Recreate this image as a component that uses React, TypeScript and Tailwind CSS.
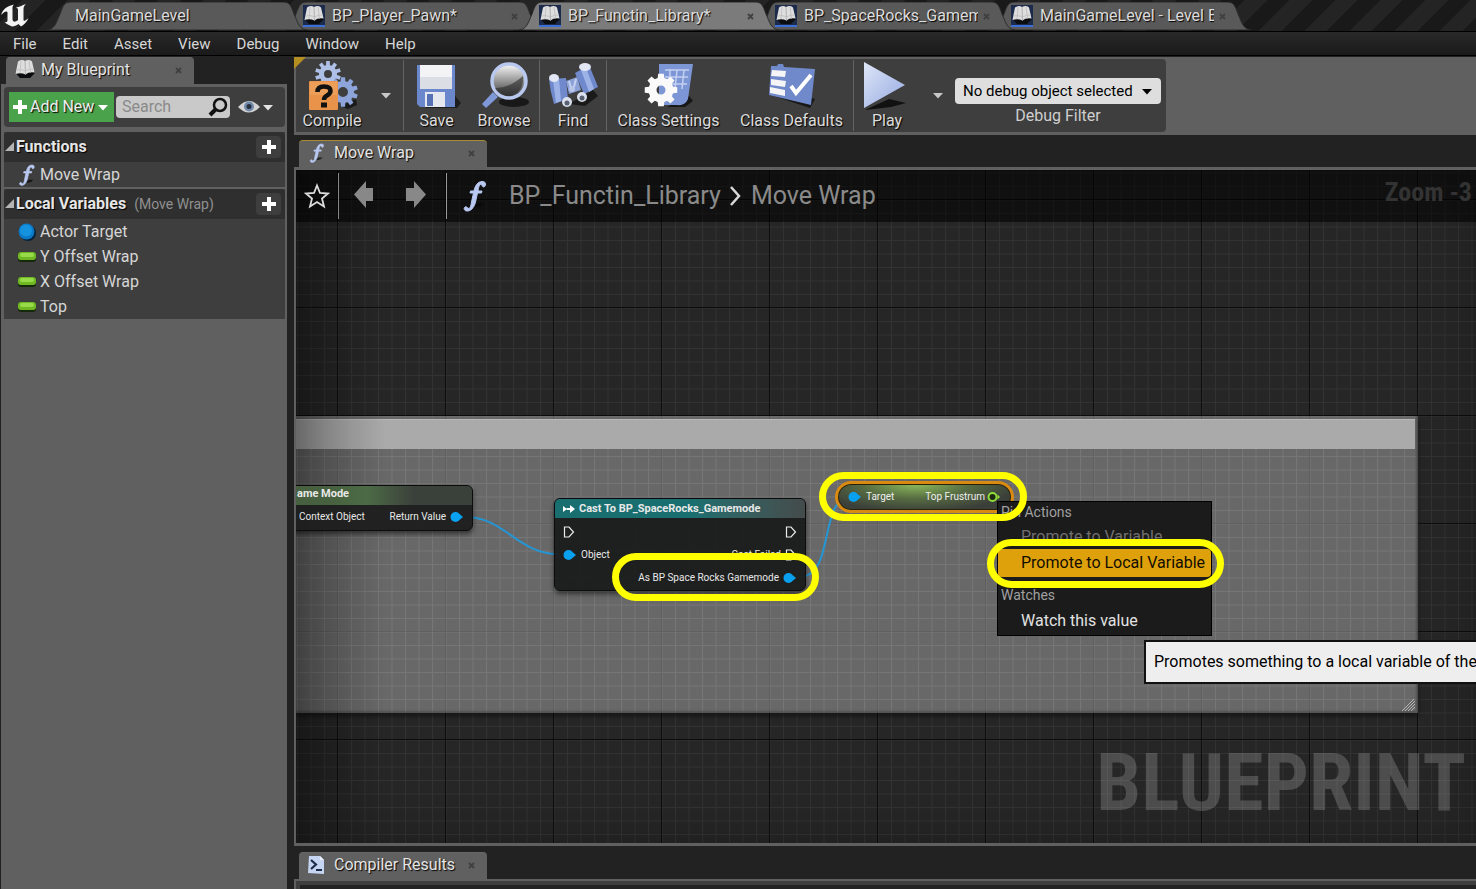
import React from "react";

const SHADOW = "[text-shadow:1px_1px_1px_#000]";

function gearPath(cx: number, cy: number, outer: number, inner: number, teeth: number) {
  const pts: string[] = [];
  const step = (Math.PI * 2) / teeth;
  for (let i = 0; i < teeth; i++) {
    const a = i * step - Math.PI / 2;
    const corners: [number, number][] = [
      [-0.34, inner],
      [-0.22, outer],
      [0.22, outer],
      [0.34, inner],
    ];
    corners.forEach(([o, r]) => {
      pts.push(`${(cx + Math.cos(a + o * step) * r).toFixed(2)} ${(cy + Math.sin(a + o * step) * r).toFixed(2)}`);
    });
  }
  return `M${pts.join("L")}Z`;
}

function UnrealLogo() {
  return (
    <svg width="30" height="30" viewBox="0 0 30 30" aria-hidden="true">
      <path
        fill="#f4f4f4"
        d="M1 15C3 9 7 6 14 4.5C12.5 6 12.5 7 12.5 9V19.5C12.5 21 14 22 15.500 21.500C16.300 21.200 17.500 20.500 18 20V10C18 8.500 17.500 8 16 7.500C19 7 22 5.500 26 4C24 6 23.500 7 23.500 9V20C23.500 21.500 25 21 28.500 18C27 22 24 24.500 21 26.500L18.500 24C16.500 25.500 14.500 26.500 12 26.500C9.500 25.500 7 24 4.500 22.500C7 22.300 7.500 21.500 7.500 20V13C7.500 10.500 5 11 1 15Z"
      />
    </svg>
  );
}

function BookIcon({ framed = false }: { framed?: boolean }) {
  return (
    <svg width="22" height="22" viewBox="0 0 22 22" className="shrink-0" aria-hidden="true">
      {framed && <rect width="22" height="22" fill="#1c2a4c" />}
      {framed && <rect y="20" width="22" height="2" fill="#3c6fd6" />}
      <path d="M1.500 14L6 19H16L21 14L18 12H4Z" fill="#0c0d10" />
      <path d="M4 2.500Q8 0 11 2Q15 0 18 2.500L20.500 13.500Q15 12.500 11.500 15.500Q7 13.500 1.500 15Z" fill="#dedede" />
      <path d="M11 2L11.500 15.500" stroke="#b0b0b0" fill="none" />
      <path d="M7 2L6 14M15 2L16.500 13.500M2.500 11Q7 9.500 11.500 12Q15 9.500 20 10" stroke="#c4c4c4" fill="none" />
    </svg>
  );
}

function CloseIcon() {
  return (
    <svg width="7" height="7" viewBox="0 0 7 7" aria-hidden="true">
      <path d="M1 1L6 6M6 1L1 6" stroke="#404040" strokeWidth="1.800" />
    </svg>
  );
}

function FunctionIcon({ size }: { size: number }) {
  return (
    <svg width={size} height={size} viewBox="0 0 32 32" className="shrink-0" aria-hidden="true">
      <path d="M13 28L18 23L25 23L22 26Z" fill="#070707" opacity=".7" />
      <path
        fill="#b9c8f0"
        stroke="#b9c8f0"
        strokeWidth="1"
        d="M26 2.500C27 4 26.500 7 24.500 7C23 7 23.500 4.500 22 4.500C20 4.500 19.500 8 19 11H23L22.500 13H18.500L16.500 22C15 28 11.500 31.500 7.500 31C5 30.700 4.500 28 6 27C8 26 8.500 28.800 10 28.500C11.500 28.200 12 25 12.500 22L14.500 13H11L11.500 11H15C16 5.500 19 1.500 23 1.500C24.500 1.500 25.500 2 26 2.500Z"
      />
    </svg>
  );
}

function Caret({ className = "text-[#c8c8c8]" }: { className?: string }) {
  return (
    <svg width="12" height="7" viewBox="0 0 12 7" className={className} aria-hidden="true">
      <path d="M1 1H11L6 6.500Z" fill="currentColor" />
    </svg>
  );
}

function PlusIcon() {
  return (
    <svg width="14" height="14" viewBox="0 0 14 14" aria-hidden="true">
      <path d="M5 0H9V5H14V9H9V14H5V9H0V5H5Z" fill="#fff" />
    </svg>
  );
}

function CompileIcon() {
  return (
    <svg width="52" height="50" viewBox="0 0 52 50" aria-hidden="true">
      <path d="M34 45L50 38L51 44L42 48Z" fill="#1a1a1a" />
      <path fillRule="evenodd" fill="#aebfe8" d={gearPath(22, 13, 13, 9, 10) + "M22 9A4 4 0 1 0 22 17A4 4 0 1 0 22 9Z"} />
      <path fillRule="evenodd" fill="#8ea5dc" d={gearPath(37, 31, 15, 11, 10) + "M37 26A5 5 0 1 0 37 36A5 5 0 1 0 37 26Z"} />
      <rect x="3" y="20" width="29" height="29" rx="1" fill="#e8924a" />
      <rect x="4" y="21" width="27" height="13" fill="#f0a763" opacity=".6" />
      <path d="M11.500 31Q11.500 25.500 18 25.500Q24.500 25.500 24.500 30Q24.500 32.500 21 34.500Q18 36 18 39" fill="none" stroke="#111" strokeWidth="4.500" />
      <rect x="15" y="41.500" width="6" height="5" fill="#111" />
    </svg>
  );
}

function SaveIcon() {
  return (
    <svg width="48" height="50" viewBox="0 0 48 50" aria-hidden="true">
      <path d="M38 30L48 42L44 47H12Z" fill="#1d1d1d" />
      <path d="M4 4H42V46H7L4 43Z" fill="#6b88cd" />
      <path d="M7 4H39V28H7Z" fill="#f3f3f5" />
      <path d="M7 16H39V28H7Z" fill="#dcdee6" />
      <path d="M12 31H32V46H12Z" fill="#e6e8ef" />
      <path d="M14 33H20V45H14Z" fill="#5671b6" />
    </svg>
  );
}

function BrowseIcon() {
  return (
    <svg width="52" height="50" viewBox="0 0 52 50" aria-hidden="true">
      <defs>
        <linearGradient id="lens" x1="0" y1="0" x2="0" y2="1">
          <stop offset="0" stopColor="#fafafa" />
          <stop offset=".55" stopColor="#8c8c8c" />
          <stop offset="1" stopColor="#303030" />
        </linearGradient>
      </defs>
      <ellipse cx="36" cy="41" rx="15" ry="5" fill="#181818" />
      <path d="M15 31L4 43L8 47L20 36Z" fill="#7f99d8" />
      <circle cx="31" cy="20" r="17" fill="url(#lens)" stroke="#b9c8ef" strokeWidth="3.500" />
      <path d="M17 27Q30 28 45 15Q46 32 31 35Q20 34 17 27Z" fill="#2a2a2a" opacity=".6" />
    </svg>
  );
}

function FindIcon() {
  return (
    <svg width="52" height="50" viewBox="0 0 52 50" aria-hidden="true">
      <path d="M22 43L46 29L51 35L38 45Z" fill="#1a1a1a" />
      <path d="M2 18L19 17L21 38L7 43Q3 30 2 18Z" fill="#6f89cc" />
      <path d="M28 12L42 4Q47 16 51 26L37 33Z" fill="#6f89cc" />
      <path d="M6 19L12 18L14 40L9 42Z" fill="#9db3e8" />
      <path d="M34 9L39 7L47 28L42 31Z" fill="#9db3e8" />
      <path d="M19 20L30 16L34 29L22 33Z" fill="#8ba1d8" />
      <path d="M22 20L25 30M29 18L27 26" stroke="#c6d1ef" strokeWidth="2" />
      <circle cx="25" cy="28" r="3" fill="#b9c6ea" />
      <ellipse cx="7" cy="17" rx="5" ry="4" fill="#e3e7f3" />
      <ellipse cx="38" cy="6" rx="6" ry="4" fill="#e3e7f3" />
      <circle cx="20" cy="41" r="5" fill="#dbe0ee" />
      <circle cx="20" cy="42" r="2.500" fill="#59606f" />
      <circle cx="35" cy="36" r="5" fill="#dbe0ee" />
      <circle cx="35" cy="37" r="2.500" fill="#59606f" />
    </svg>
  );
}

function SettingsIcon() {
  return (
    <svg width="52" height="50" viewBox="0 0 52 50" aria-hidden="true">
      <path d="M24 46L46 35L50 40L42 46Z" fill="#181818" />
      <path d="M16 3H50L45 38Q42 45 34 44H16Z" fill="#7d97d6" />
      <path d="M22 9H46M22 16H45M28 23H44M34 9L32 28M41 9L39 28M27 8V15" stroke="#c3d0f1" strokeWidth="1.500" />
      <path fillRule="evenodd" fill="#fafafa" d={gearPath(18, 29, 16.5, 12.5, 8) + "M18 24.500A4.500 4.500 0 1 0 18 33.500A4.500 4.500 0 1 0 18 24.500Z"} />
    </svg>
  );
}

function DefaultsIcon() {
  return (
    <svg width="52" height="50" viewBox="0 0 52 50" aria-hidden="true">
      <path d="M8 35L44 47L49 38L20 30Z" fill="#181818" />
      <path d="M5 5H11L12 3H17L18 6L49 8L45 44L3 34Z" fill="#7089cb" />
      <path d="M6 9L20 10L19 16L5 15ZM5 18L20 20L19 26L5 24ZM4 26L19 29L19 35L4 32Z" fill="#f5f5f8" />
      <path d="M25 25L30 32L45 14" fill="none" stroke="#fff" strokeWidth="4" />
    </svg>
  );
}

function PlayIcon() {
  return (
    <svg width="48" height="50" viewBox="0 0 48 50" aria-hidden="true">
      <defs>
        <linearGradient id="play" x1="0" y1="0" x2="1" y2="1">
          <stop offset="0" stopColor="#dfe6f8" />
          <stop offset="1" stopColor="#93a9df" />
        </linearGradient>
      </defs>
      <path d="M2 49L26 38L43 42L28 46Z" fill="#111" />
      <path d="M1 1L42 24L1 47Z" fill="url(#play)" />
    </svg>
  );
}

type WindowTabProps = { title: string; icon?: boolean; active?: boolean; closable?: boolean; z: string };

function WindowTab({ title, icon = true, active = false, closable = true, z }: WindowTabProps) {
  return (
    <div className={`relative -mr-6 flex h-7 w-[260px] shrink-0 items-center pr-5 ${icon ? "pl-5" : "pl-7"} ${z}`}>
      <svg className="absolute inset-0 h-full w-full" viewBox="0 0 260 28" preserveAspectRatio="none" aria-hidden="true">
        <path
          d="M0 28C8 27 9 21 13 12C16 4 17 0 24 0H236C243 0 244 4 247 12C251 21 252 27 260 28Z"
          fill={active ? "#7b7b7b" : "#595959"}
          stroke="#2c2c2c"
          strokeWidth="1"
        />
      </svg>
      {icon && (
        <span className="relative mr-[7px]">
          <BookIcon framed />
        </span>
      )}
      <button className={`relative min-w-0 flex-1 overflow-hidden text-left whitespace-nowrap text-[#dcdcdc] ${SHADOW}`}>{title}</button>
      {closable && (
        <button aria-label={`Close ${title}`} className="relative px-[5px]">
          <CloseIcon />
        </button>
      )}
    </div>
  );
}

function PanelTab({ title, icon, gold = false }: { title: string; icon: React.ReactNode; gold?: boolean }) {
  return (
    <div
      className={`flex h-[27px] w-[188px] items-center gap-[5px] rounded-t-sm border-t bg-[#606060] pr-3 pb-0.5 pl-2 ${gold ? "border-[#a98a35]" : "border-[#666]"}`}
    >
      <span className="flex w-[22px] shrink-0">{icon}</span>
      <button className={`flex-1 text-left whitespace-nowrap text-[#e4e4e4] ${SHADOW}`}>{title}</button>
      <button aria-label={`Close ${title}`}>
        <CloseIcon />
      </button>
    </div>
  );
}

function SectionHeader({ title, note }: { title: string; note?: string }) {
  return (
    <div className="flex h-[30px] items-center rounded-t bg-[#2f2f2f] pr-1">
      <svg width="12" height="12" viewBox="0 0 12 12" aria-hidden="true">
        <path d="M10 1V10H1Z" fill="#b5b5b5" />
      </svg>
      <h2 className={`font-bold text-[#e6e6e6] ${SHADOW}`}>{title}</h2>
      {note && <span className="ml-2 text-sm text-[#8f8f8f]">{note}</span>}
      <button aria-label={`Add ${title}`} className="ml-auto flex h-[22px] w-[25px] items-center justify-center rounded-sm bg-[#3e3e3e]">
        <PlusIcon />
      </button>
    </div>
  );
}

function VariableRow({ name, kind }: { name: string; kind: "object" | "float" }) {
  return (
    <li className="flex h-[25px] items-center gap-1 pl-3.5">
      <svg width="18" height="18" viewBox="0 0 18 18" aria-hidden="true">
        {kind === "object" ? (
          <>
            <circle cx="10" cy="10" r="8" fill="#04213a" />
            <circle cx="8.500" cy="8.500" r="8" fill="#0a78c4" />
            <circle cx="8" cy="7.500" r="6" fill="#1592de" />
          </>
        ) : (
          <>
            <rect y="4" width="18" height="10" rx="3" fill="#16280a" />
            <rect y="4" width="18" height="8" rx="3" fill="#6fb824" />
            <rect x="2" y="5" width="14" height="4" rx="2" fill="#97dc48" />
          </>
        )}
      </svg>
      <span>{name}</span>
    </li>
  );
}

function Sidebar() {
  return (
    <aside className="flex w-[287px] shrink-0 flex-col pt-px pl-px">
      <div className="pl-[5px]">
        <PanelTab title="My Blueprint" icon={<BookIcon />} />
      </div>
      <div className="flex flex-1 flex-col bg-[#606060] pt-[3px] pr-0.5 pl-[3px]">
        <div className="mb-[5px] flex h-10 items-center gap-0.5 rounded bg-[#3e3e3e] px-[5px]">
          <button className="flex h-[30px] w-[105px] shrink-0 items-center gap-[3px] bg-[#4aa24a] pl-1 whitespace-nowrap text-[#eee]">
            <PlusIcon />
            <span className={SHADOW}>Add New</span>
            <Caret className="text-white" />
          </button>
          <div className="flex h-[22px] w-[114px] items-center rounded-sm bg-[#c9c9c9] pr-0.5 pl-1.5">
            <input
              type="search"
              aria-label="Search"
              placeholder="Search"
              className="w-full min-w-0 bg-transparent text-base leading-5 outline-none placeholder:text-[#8a8a8a]"
            />
            <svg width="20" height="20" viewBox="0 0 20 20" className="shrink-0" aria-hidden="true">
              <circle cx="12" cy="8" r="6" fill="none" stroke="#111" strokeWidth="2.500" />
              <path d="M8 12L2 18" stroke="#111" strokeWidth="4" />
            </svg>
          </div>
          <button aria-label="View options" className="flex items-center gap-0.5 pl-1.5">
            <svg width="22" height="14" viewBox="0 0 22 14" aria-hidden="true">
              <path d="M0 7Q11 -5 22 7Q11 18 0 7Z" fill="#d4d4d4" />
              <circle cx="11" cy="6.500" r="5" fill="#7189a9" />
              <circle cx="11" cy="6.500" r="2.500" fill="#26313f" />
            </svg>
            <Caret className="text-[#e4e4e4]" />
          </button>
        </div>
        <section className="mb-0.5 bg-[#3e3e3e]">
          <SectionHeader title="Functions" />
          <ul className="text-[#d6d6d6]">
            <li className="flex h-[25px] items-center gap-0.5 pl-3">
              <FunctionIcon size={22} />
              <span>Move Wrap</span>
            </li>
          </ul>
        </section>
        <section className="bg-[#3e3e3e]">
          <SectionHeader title="Local Variables" note="(Move Wrap)" />
          <ul className="text-[#d6d6d6]">
            <VariableRow name="Actor Target" kind="object" />
            <VariableRow name="Y Offset Wrap" kind="float" />
            <VariableRow name="X Offset Wrap" kind="float" />
            <VariableRow name="Top" kind="float" />
          </ul>
        </section>
      </div>
    </aside>
  );
}

function ToolButton({ label, icon, width }: { label: string; icon: React.ReactNode; width: string }) {
  return (
    <button className={`flex shrink-0 flex-col items-center ${width}`}>
      {icon}
      <span className={`leading-5 whitespace-nowrap text-[#dcdcdc] ${SHADOW}`}>{label}</span>
    </button>
  );
}

function ToolSeparator() {
  return <div className="my-px w-px shrink-0 self-stretch bg-[#636363]" />;
}

function Toolbar() {
  return (
    <div className="relative shrink-0 bg-[#606060] pt-0.5 pb-[3px] pl-0.5">
      <div className="flex h-[73px] w-fit items-center rounded-r bg-[#3e3e3e] pr-[5px]">
        <ToolButton label="Compile" icon={<CompileIcon />} width="w-[72px]" />
        <button aria-label="Compile options" className="flex w-[35px] justify-center">
          <Caret />
        </button>
        <ToolSeparator />
        <ToolButton label="Save" icon={<SaveIcon />} width="w-[65px]" />
        <ToolButton label="Browse" icon={<BrowseIcon />} width="w-[70px]" />
        <ToolSeparator />
        <ToolButton label="Find" icon={<FindIcon />} width="w-[66px]" />
        <ToolSeparator />
        <ToolButton label="Class Settings" icon={<SettingsIcon />} width="w-[123px]" />
        <ToolButton label="Class Defaults" icon={<DefaultsIcon />} width="w-[123px]" />
        <ToolSeparator />
        <ToolButton label="Play" icon={<PlayIcon />} width="w-[66px]" />
        <button aria-label="Play options" className="flex w-[35px] justify-center">
          <Caret />
        </button>
        <div className="flex flex-col items-center self-end pb-1">
          <div className="relative">
            <select
              id="debug-object"
              className="h-[26px] w-[206px] appearance-none rounded-sm bg-[#dedede] pl-2 text-[15px] text-black"
              defaultValue="none"
            >
              <option value="none">No debug object selected</option>
            </select>
            <Caret className="pointer-events-none absolute top-2.5 right-2 text-black" />
          </div>
          <label htmlFor="debug-object" className="leading-6 text-[#cfcfcf]">
            Debug Filter
          </label>
        </div>
      </div>
      <svg width="12" height="12" viewBox="0 0 12 12" className="absolute top-0 left-0" aria-hidden="true">
        <path d="M0 0H12L0 12Z" fill="#b58e22" />
      </svg>
    </div>
  );
}

function GraphGrid() {
  return (
    <svg className="absolute inset-0 h-full w-full" aria-hidden="true">
      <defs>
        <pattern id="minor" x="41.5" y="29.5" width="13.5" height="13.5" patternUnits="userSpaceOnUse">
          <path d="M0 .500H13.500M.500 0V13.500" stroke="#fff" strokeOpacity=".055" fill="none" />
        </pattern>
        <pattern id="major" x="41" y="29" width="108" height="108" patternUnits="userSpaceOnUse">
          <path d="M0 .500H108M.500 0V108" stroke="#000" strokeOpacity=".7" fill="none" />
        </pattern>
      </defs>
      <rect width="100%" height="100%" fill="url(#minor)" />
      <rect width="100%" height="100%" fill="url(#major)" />
    </svg>
  );
}

function DataPin({ hollow = false }: { hollow?: boolean }) {
  return (
    <svg width="14" height="12" viewBox="0 0 14 12" className="shrink-0" aria-hidden="true">
      {hollow ? (
        <>
          <circle cx="5.500" cy="6" r="4" fill="#1c2a12" stroke="#8fdc3a" strokeWidth="2" />
          <path d="M10.500 3.500L13 6L10.500 8.500Z" fill="#8fdc3a" />
        </>
      ) : (
        <>
          <circle cx="5.500" cy="6" r="5" fill="#0aa0f0" />
          <path d="M9.500 3L13 6L9.500 9Z" fill="#0aa0f0" />
        </>
      )}
    </svg>
  );
}

function ExecPin() {
  return (
    <svg width="12" height="12" viewBox="0 0 12 12" className="shrink-0" aria-hidden="true">
      <path d="M1.500 1H6L10.500 6L6 11H1.500Z" fill="none" stroke="#ececec" strokeWidth="1.200" />
    </svg>
  );
}

function Highlight({ place }: { place: string }) {
  return <div className={`pointer-events-none absolute rounded-full border-[7px] border-[#ffff00] ${place}`} />;
}

const NODE = "absolute rounded-md border border-[#0c0c0c] text-[10px] leading-4 text-[#e8e8e8] shadow-[0_3px_5px_rgba(0,0,0,0.5)]";

function Graph() {
  return (
    <main className="relative min-h-0 flex-1 overflow-hidden bg-[#262626]">
      <GraphGrid />
      <div className="absolute top-[246px] left-0 h-[297px] w-[1122px] bg-[#aaaaaa]/50 shadow-[inset_-2px_-2px_2px_rgba(60,60,60,0.5),0_3px_5px_rgba(0,0,0,0.5)]" />
      <svg className="absolute inset-0 h-full w-full" aria-hidden="true">
        <rect y="279" width="1120" height="262" fill="url(#minor)" />
      </svg>
      <div className="absolute top-[249px] left-0 h-[30px] w-[1119px] border-t border-[#b8b8b8] bg-[#aaaaaa]" />
      <div className="pointer-events-none absolute inset-0 bg-linear-to-r from-black/30 to-transparent to-[90px]" />
      <div className="pointer-events-none absolute inset-0 shadow-[inset_0_0_50px_rgba(0,0,0,0.25)]" />

      <svg className="absolute inset-0 h-full w-full" aria-hidden="true">
        <path d="M170 347C208 347 222 384 262 384" fill="none" stroke="#2596d4" strokeWidth="2" />
        <path d="M503 407C540 407 522 327 555 327" fill="none" stroke="#2596d4" strokeWidth="2" />
        <path d="M1109 541L1119 531M1112 541L1119 534M1115 541L1119 537M1106 541L1118 529" stroke="#b5b5b5" />
      </svg>

      <div className={`${NODE} top-[315px] -left-4 h-[46px] w-[193px] overflow-hidden bg-[#1c1e1c]/95`}>
        <div className="h-[19px] bg-linear-to-r from-[#47603f] from-25% via-[#4c6b45] via-45% to-[#3a403a] to-70% pl-4 text-[11px] font-bold">
          ame Mode
        </div>
        <div className="flex h-6 items-center justify-between pr-2 pl-[18px]">
          <span>Context Object</span>
          <span className="flex items-center gap-1">
            Return Value
            <DataPin />
          </span>
        </div>
      </div>

      <div className={`${NODE} top-[328px] left-[258px] h-[93px] w-[252px] overflow-hidden bg-[#1a1c1b]/95`}>
        <div className="flex h-[19px] items-center gap-1 bg-linear-to-r from-[#196f70] from-55% to-[#444b4b] pl-2 text-[11px] font-bold">
          <svg width="12" height="10" viewBox="0 0 12 10" aria-hidden="true">
            <path d="M0 2V8L4 5ZM3 4H8V6H3ZM7 1L12 5L7 9Z" fill="#fff" />
          </svg>
          Cast To BP_SpaceRocks_Gamemode
        </div>
        <div className="flex flex-col pt-0.5 pr-2 pl-2">
          <div className="flex h-[23px] items-center justify-between">
            <ExecPin />
            <ExecPin />
          </div>
          <div className="flex h-[23px] items-center justify-between">
            <span className="flex items-center gap-1">
              <DataPin />
              Object
            </span>
            <span className="flex items-center gap-1">
              Cast Failed
              <ExecPin />
            </span>
          </div>
          <div className="flex h-[23px] items-center justify-end gap-1">
            As BP Space Rocks Gamemode
            <DataPin />
          </div>
        </div>
      </div>

      <div className="absolute top-[311px] left-[539px] flex h-8 w-[179px] items-center justify-between rounded-2xl border-[3px] border-[#d98a10] bg-[radial-gradient(ellipse_at_45%_0%,#8dbb5c,#566b42_40%,#3b3f39_75%)] pr-2.5 pl-2.5 text-[10px] leading-4 text-[#eee] shadow-[inset_0_0_0_1px_#2a2208]">
        <span className="flex items-center gap-1">
          <DataPin />
          Target
        </span>
        <span className="flex items-center gap-0.5">
          Top Frustrum
          <DataPin hollow />
        </span>
      </div>

      <div className="absolute inset-x-0 top-0 flex h-[52px] items-center bg-black/55">
        <button aria-label="Favorite" className="flex w-[42px] justify-center">
          <svg width="26" height="26" viewBox="0 0 26 26" aria-hidden="true">
            <path d="M13 2.500L16 10L24 10.500L18 15.500L20 23.500L13 19L6 23.500L8 15.500L2 10.500L10 10Z" fill="none" stroke="#dedede" strokeWidth="1.800" />
          </svg>
        </button>
        <div className="h-[46px] w-px bg-[#888]" />
        <div className="flex w-[107px] gap-[30px] pl-3.5">
          <button aria-label="Back">
            <svg width="22" height="32" viewBox="0 0 22 32" aria-hidden="true">
              <path d="M1 14.500L13 1V8H20V21H13V28Z" fill="#888" />
            </svg>
          </button>
          <button aria-label="Forward">
            <svg width="22" height="32" viewBox="0 0 22 32" aria-hidden="true">
              <path d="M21 14.500L9 1V8H1V21H9V28Z" fill="#888" />
            </svg>
          </button>
        </div>
        <div className="h-[46px] w-px bg-[#999]" />
        <nav aria-label="Breadcrumb" className="flex items-center pl-3 text-[25px] whitespace-nowrap text-[#8a8a8a]">
          <FunctionIcon size={32} />
          <a href="#library" className="pl-[18px]">
            BP_Functin_Library
          </a>
          <svg width="14" height="22" viewBox="0 0 14 22" className="mx-2" aria-hidden="true">
            <path d="M2 2L10 11L2 20" fill="none" stroke="#d8d8d8" strokeWidth="2.500" />
          </svg>
          <a href="#move-wrap">Move Wrap</a>
        </nav>
        <div className="ml-auto self-start pt-3 pr-1 font-['Roboto_Condensed',Roboto,sans-serif] text-[26px] font-bold whitespace-nowrap text-[#333]">
          Zoom -3
        </div>
      </div>

      <div className="absolute right-2.5 bottom-5 font-['Roboto_Condensed',Roboto,sans-serif] text-[80px] leading-[80px] font-bold text-white/18">
        BLUEPRINT
      </div>

      <div role="menu" className="absolute top-[331px] left-[701px] flex h-[135px] w-[215px] flex-col border border-black bg-[#1b1b1b] text-[#e2e2e2]">
        <div className="h-[22px] pl-[3px] text-sm leading-5 text-[#a0a0a0]">Pin Actions</div>
        <button role="menuitem" className="h-[25px] pl-[23px] text-left text-[#6f6f6f]">
          Promote to Variable
        </button>
        <button role="menuitem" className="h-7 rounded-sm bg-[#dea10c] pl-[23px] text-left whitespace-nowrap text-[#120d00]">
          Promote to Local Variable
        </button>
        <div className="mt-2 h-[22px] pl-[3px] text-sm leading-5 text-[#a0a0a0]">Watches</div>
        <button role="menuitem" className="h-7 pl-[23px] text-left">
          Watch this value
        </button>
      </div>

      <div role="tooltip" className="absolute top-[470px] left-[848px] flex h-11 w-[400px] items-center border-2 border-[#111] bg-[#eeeeee] pl-2 whitespace-nowrap text-black">
        Promotes something to a local variable of the
      </div>

      <Highlight place="top-[302px] left-[523px] h-[49px] w-[208px]" />
      <Highlight place="top-[383px] left-[316px] h-[48px] w-[207px]" />
      <Highlight place="top-[369px] left-[691px] h-[49px] w-[237px]" />
    </main>
  );
}

function ScriptIcon() {
  return (
    <svg width="18" height="20" viewBox="0 0 18 20" aria-hidden="true">
      <path d="M2 1H13L17 5V19L1 18Z" fill="#c5d5f2" />
      <path d="M13 1V5H17Z" fill="#eef3ff" />
      <path d="M4 5L9 9.500L4 14M9 15H15" fill="none" stroke="#1e2c48" strokeWidth="2.200" />
    </svg>
  );
}

export default function App() {
  const menus = ["File", "Edit", "Asset", "View", "Debug", "Window", "Help"];
  return (
    <div className="flex h-screen flex-col overflow-hidden bg-[#222222] font-[Roboto,sans-serif] text-base leading-5 text-[#d6d6d6]">
      <header className="flex h-[31px] shrink-0 items-start overflow-hidden bg-[repeating-linear-gradient(135deg,#191919_0_16px,#242424_16px_32px)] pt-0.5">
        <div className="-mt-0.5 w-[47px] shrink-0">
          <UnrealLogo />
        </div>
        <WindowTab title="MainGameLevel" icon={false} closable={false} z="z-30" />
        <WindowTab title="BP_Player_Pawn*" z="z-20" />
        <WindowTab title="BP_Functin_Library*" active z="z-40" />
        <WindowTab title="BP_SpaceRocks_Gamemode" z="z-20" />
        <WindowTab title="MainGameLevel - Level Blueprint" z="z-10" />
      </header>
      <nav
        aria-label="Main menu"
        className="flex h-[25px] shrink-0 items-center gap-[26px] border-y border-black bg-linear-to-b from-[#292929] to-[#1a1a1a] pl-[13px] text-[15px]"
      >
        {menus.map((m) => (
          <button key={m}>{m}</button>
        ))}
      </nav>
      <div className="flex min-h-0 flex-1">
        <Sidebar />
        <div className="ml-[7px] flex min-w-0 flex-1 flex-col pt-px">
          <Toolbar />
          <div className="flex shrink-0 pt-[5px] pl-[5px]">
            <PanelTab title="Move Wrap" gold icon={<FunctionIcon size={20} />} />
          </div>
          <div className="flex min-h-0 flex-1 flex-col border-y-[3px] border-l-2 border-[#606060]">
            <Graph />
          </div>
          <div className="flex shrink-0 pt-1.5 pl-[5px]">
            <PanelTab title="Compiler Results" icon={<ScriptIcon />} />
          </div>
          <div className="h-2.5 shrink-0 border-t-2 border-l-2 border-[#606060] bg-[#3e3e3e] pt-1 pl-1">
            <div className="h-full bg-[#222222]" />
          </div>
        </div>
      </div>
    </div>
  );
}
